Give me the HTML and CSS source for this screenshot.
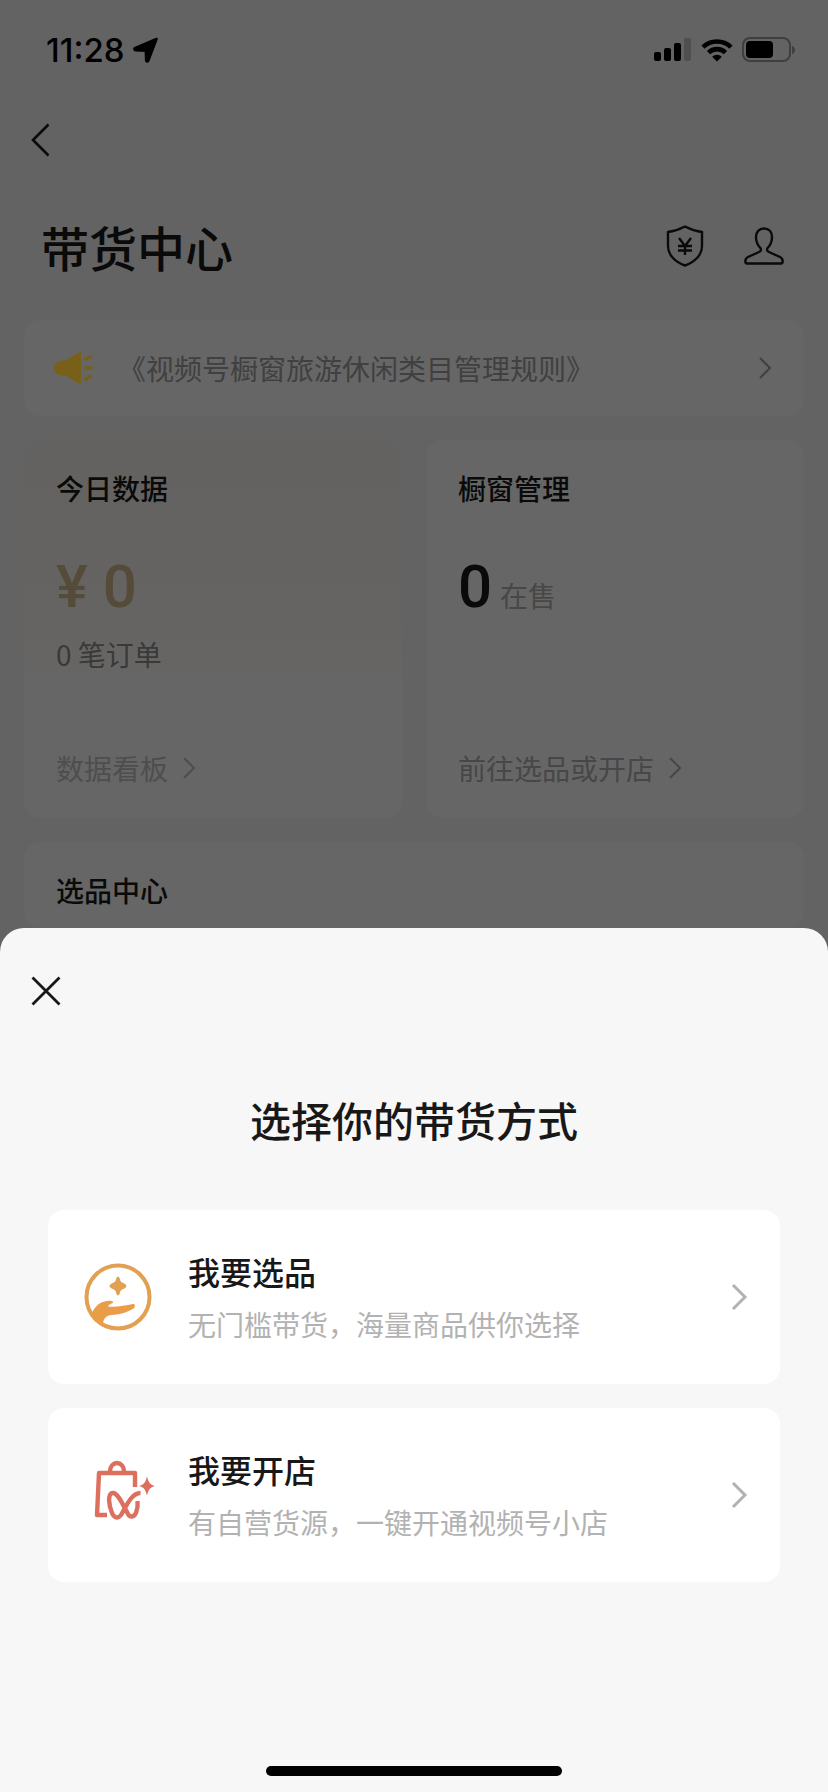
FILE: index.html
```html
<!DOCTYPE html>
<html lang="zh-CN">
<head>
<meta charset="utf-8">
<meta name="viewport" content="width=device-width, initial-scale=1">
<title>带货中心</title>
<link rel="stylesheet" href="styles.css">
</head>
<body>
<div class="screen">
  <div class="page">
    <div class="status">
      <div class="status-left">
        <span class="time">11:28</span>
        <svg class="location" width="26" height="26" viewBox="0 0 26 26" aria-hidden="true"><path d="M23.500 2 2 11.200c-1 .6-.7 1.800.4 1.900l10.500.5.3 9.800c.1 1.200 1.400 1.400 2 .4z" fill="currentColor" stroke="currentColor" stroke-width="2.600" stroke-linejoin="round"/></svg>
      </div>
      <div class="status-right">
        <svg width="38" height="24" viewBox="0 0 38 24" aria-hidden="true"><rect x="0" y="14" width="7" height="9" rx="2"/><rect x="10" y="10" width="7" height="13" rx="2"/><rect x="20" y="5" width="7" height="18" rx="2"/><rect x="30" y="0" width="7" height="23" rx="2" fill="#4f4f4f"/></svg>
        <svg width="32" height="24" viewBox="0 0 32 24" aria-hidden="true"><g fill="none" stroke="currentColor" stroke-width="4.600"><path d="M2 9.200a20 20 0 0 1 28 0"/><path d="M7.500 14.600a12.200 12.200 0 0 1 17 0"/></g><path d="M16 23.500l-4.900-4.700a7 7 0 0 1 9.800 0z"/></svg>
        <svg width="54" height="26" viewBox="0 0 54 26" aria-hidden="true"><rect x="1" y="1" width="47" height="23" rx="7" fill="none" stroke="#3f3f3f" stroke-width="2"/><rect x="4" y="4" width="27" height="17" rx="4"/><path d="M50 9c4 1 4 7 0 8z" fill="#3f3f3f"/></svg>
      </div>
    </div>
    <nav class="nav">
      <button class="icon-button" type="button" aria-label="返回"><svg width="20" height="34" viewBox="0 0 20 34"><path d="M17.500 1.500 2 17l15.500 15.500" fill="none" stroke="currentColor" stroke-width="2.600"/></svg></button>
    </nav>
    <header class="header">
      <h1 class="page-title">带货中心</h1>
      <div class="header-actions">
        <button class="icon-button" type="button" aria-label="保证金"><svg width="38" height="42" viewBox="0 0 38 42"><g fill="none" stroke="currentColor" stroke-width="2.400" stroke-linejoin="round"><path d="M19 1.500c5 2.600 11 4.800 17 5.500v14c0 9-7 16-17 19.500C9 37 2 30 2 21V7c6-.7 12-2.900 17-5.500z"/><path d="M13 13l6 8 6-8M19 21v9M12 21h14M12 25.500h14"/></g></svg></button>
        <button class="icon-button" type="button" aria-label="我的"><svg width="40" height="38" viewBox="0 0 40 38"><path d="M20 1.500c-5 0-8 3.500-8 8.500 0 5 1.500 8 4 10.500 1.500 1.500 1.200 3.500-1 4.500L4 30c-2.500 1.200-3 3-2.500 5.500.1.700.5 1 1.500 1h34c1 0 1.400-.3 1.500-1 .5-2.500 0-4.300-2.500-5.500l-11-5c-2.200-1-2.500-3-1-4.500 2.500-2.500 4-5.500 4-10.500 0-5-3-8.500-8-8.500z" fill="none" stroke="currentColor" stroke-width="2.400"/></svg></button>
      </div>
    </header>
    <main class="content">
      <a class="notice" href="#">
        <svg class="horn" width="40" height="34" viewBox="0 0 40 34" aria-hidden="true"><path d="M25 1.500c1-.7 2-.5 2 1v29c0 1.500-1 1.700-2 1L13 25.500c-1.500-1-3-1-4.500-1C4 24.500 0 21.500 0 17s4-7.500 8.500-7.500c1.500 0 3 0 4.500-1z"/><path d="M30.500 8.500l7-3M30.500 17h8M30.500 29l7-4.500" fill="none" stroke="#786018" stroke-width="3.500"/></svg>
        <span class="notice-text">《视频号橱窗旅游休闲类目管理规则》</span>
        <svg class="arrow" width="14" height="24" viewBox="0 0 14 24" aria-hidden="true"><path d="M2 2l10 10L2 22"/></svg>
      </a>
      <div class="cards">
        <section class="card card-data">
          <h2 class="card-title">今日数据</h2>
          <p class="figure figure-gold">¥ 0</p>
          <p class="orders">0 笔订单</p>
          <a class="card-link card-link-soft" href="#">数据看板<svg class="arrow" width="14" height="24" viewBox="0 0 14 24" aria-hidden="true"><path d="M2 2l10 10L2 22"/></svg></a>
        </section>
        <section class="card">
          <h2 class="card-title">橱窗管理</h2>
          <p class="figure">0<span class="unit">在售</span></p>
          <a class="card-link" href="#">前往选品或开店<svg class="arrow" width="14" height="24" viewBox="0 0 14 24" aria-hidden="true"><path d="M2 2l10 10L2 22"/></svg></a>
        </section>
      </div>
      <section class="card card-last"><h2 class="card-title">选品中心</h2></section>
    </main>
  </div>
  <div class="sheet" role="dialog" aria-labelledby="sheet-title">
    <button class="icon-button close" type="button" aria-label="关闭"><svg width="30" height="30" viewBox="0 0 30 30"><path d="M1.500 1.500l27 27M28.500 1.500l-27 27" fill="none" stroke="currentColor" stroke-width="2.800"/></svg></button>
    <h2 class="sheet-title" id="sheet-title">选择你的带货方式</h2>
    <div class="options">
      <button class="option" type="button">
        <svg class="option-icon" width="76" height="76" viewBox="0 0 76 76" aria-hidden="true"><circle cx="38" cy="38" r="31.500" fill="none" stroke="#e1a052" stroke-width="4"/><path d="M38 17.500c1.500 0 1.700 2.500 2.500 4.500.7 1.700 6 2.700 6 5s-5.300 3.300-6 5c-.8 2-1 4.500-2.500 4.500s-1.700-2.500-2.500-4.500c-.7-1.700-6-2.700-6-5s5.300-3.300 6-5c.8-2 1-4.500 2.500-4.500z" fill="#e1a052"/><path d="M11 56C15 47 20 42.500 27 42c4-.5 6.500 0 6 1.500-.5 1.200-3.500 1-5 4 8 1 17-1 25-2.500 2.500-.3 2.500 3 .5 4.500-7 4.500-15 6-22 6.500-6 .5-9 4-8.500 12C18 64 13 61 11 56z" fill="#eb9c48"/></svg>
        <span class="option-body"><span class="option-title">我要选品</span><span class="option-note">无门槛带货，海量商品供你选择</span></span>
        <svg class="arrow" width="18" height="28" viewBox="0 0 18 28" aria-hidden="true"><path d="M3 2l12 12L3 26"/></svg>
      </button>
      <button class="option" type="button">
        <svg class="option-icon" width="76" height="76" viewBox="0 0 76 76" aria-hidden="true"><g fill="none" stroke="#dd6f5e" stroke-width="4.400"><path d="M27 58H17l2-42h36v14" stroke-linejoin="round"/><path d="M30 16v-2a7 8 0 0 1 14 0v2"/><path d="M60.500 36C51 36 46 50 41 58c-3 4-7 3-9-2-3-7-5-20 1-20 5 0 10 12 15 21 2 4 6 3 8-1 1.500-4 2-8 1.500-12"/></g><path d="M67 19.500c1.500 6 3 8 8 9.500-5 1.500-6.500 3.500-8 9.500-1.500-6-3-8-8-9.500 5-1.500 6.500-3.500 8-9.500z" fill="#dd6f5e"/></svg>
        <span class="option-body"><span class="option-title">我要开店</span><span class="option-note">有自营货源，一键开通视频号小店</span></span>
        <svg class="arrow" width="18" height="28" viewBox="0 0 18 28" aria-hidden="true"><path d="M3 2l12 12L3 26"/></svg>
      </button>
    </div>
    <div class="home-bar"></div>
  </div>
</div>
</body>
</html>
```
FILE: styles.css
```css
* { box-sizing: border-box; }

body {
  margin: 0;
  background: #636363;
  color: #0a0a0a;
  font-family: "Noto Sans CJK SC", sans-serif;
  font-size: 28px;
  line-height: 40px;
}

h1, h2, p { margin: 0; }

a { color: inherit; text-decoration: none; }

svg { display: block; flex: none; }

button {
  padding: 0;
  border: 0;
  background: none;
  color: inherit;
  font: inherit;
}

.screen {
  display: flex;
  flex-direction: column;
  min-height: 100vh;
}

.status {
  display: flex;
  justify-content: space-between;
  align-items: center;
  padding: 30px 32px 30px 46px;
  color: #000;
}

.status-left,
.status-right {
  display: flex;
  align-items: center;
}

.status-left { gap: 8px; }
.status-right { gap: 9px; }

.time {
  font-family: Inter, sans-serif;
  font-size: 33px;
  font-weight: 500;
}

.nav { padding: 23px 31px 0; }

.header {
  display: flex;
  justify-content: space-between;
  align-items: center;
  padding: 45px 44px 0 41px;
}

.page-title {
  font-size: 48px;
  font-weight: 500;
  line-height: 72px;
}

.header-actions {
  display: flex;
  align-items: center;
  gap: 40px;
}

.content {
  display: flex;
  flex-direction: column;
  gap: 24px;
  padding: 38px 24px 0;
}

.notice {
  display: flex;
  align-items: center;
  padding: 28px 32px 28px 30px;
  border-radius: 16px;
  background: #666;
  color: #404040;
}

.horn { fill: #786018; }

.notice-text {
  flex: 1;
  margin-left: 24px;
}

.arrow {
  fill: none;
  stroke: currentColor;
  stroke-width: 2;
}

.cards {
  display: grid;
  grid-template-columns: 1fr 1fr;
  gap: 24px;
}

.card {
  display: flex;
  flex-direction: column;
  padding: 28px 32px 30px;
  border-radius: 16px;
  background: #666;
}

.card-data { background: linear-gradient(#636260, #666462 50%, #666 65%); }

.card-title {
  font-size: 28px;
  font-weight: 500;
}

.figure {
  margin-top: 45px;
  font-family: Roboto, "Noto Sans CJK SC", sans-serif;
  font-size: 60px;
  font-weight: 500;
  line-height: 68px;
}

.figure-gold { color: #544b38; }

.unit {
  margin-left: 8px;
  color: #474747;
  font-size: 28px;
  font-weight: 400;
}

.orders {
  margin-top: 13px;
  color: #393939;
}

.card-link {
  display: flex;
  align-items: center;
  gap: 14px;
  margin-top: auto;
  color: #474747;
}

.card-data .card-link { padding-top: 74px; }

.card-link-soft { color: #4e4e4e; }

.card-last { padding-bottom: 18px; }

.sheet {
  display: flex;
  flex: 1;
  flex-direction: column;
  padding: 48px 48px 16px;
  border-radius: 24px 24px 0 0;
  background: #f7f7f7;
  color: #181818;
}

.close {
  align-self: flex-start;
  margin-left: -17px;
}

.sheet-title {
  margin-top: 83px;
  font-size: 41px;
  font-weight: 500;
  line-height: 60px;
  text-align: center;
}

.options {
  display: flex;
  flex-direction: column;
  gap: 24px;
  margin-top: 61px;
}

.option {
  display: flex;
  align-items: center;
  padding: 36px 32px;
  border-radius: 16px;
  background: #fff;
  text-align: left;
}

.option-body {
  display: flex;
  flex: 1;
  flex-direction: column;
  gap: 8px;
  margin-left: 32px;
  padding-bottom: 4px;
}

.option-title {
  font-size: 32px;
  font-weight: 500;
  line-height: 50px;
}

.option-note { color: #b2b2b2; }

.option .arrow {
  color: #b2b2b2;
  stroke-width: 3;
}

.home-bar {
  width: 296px;
  height: 10px;
  margin: auto auto 0;
  border-radius: 5px;
  background: #000;
}
```
